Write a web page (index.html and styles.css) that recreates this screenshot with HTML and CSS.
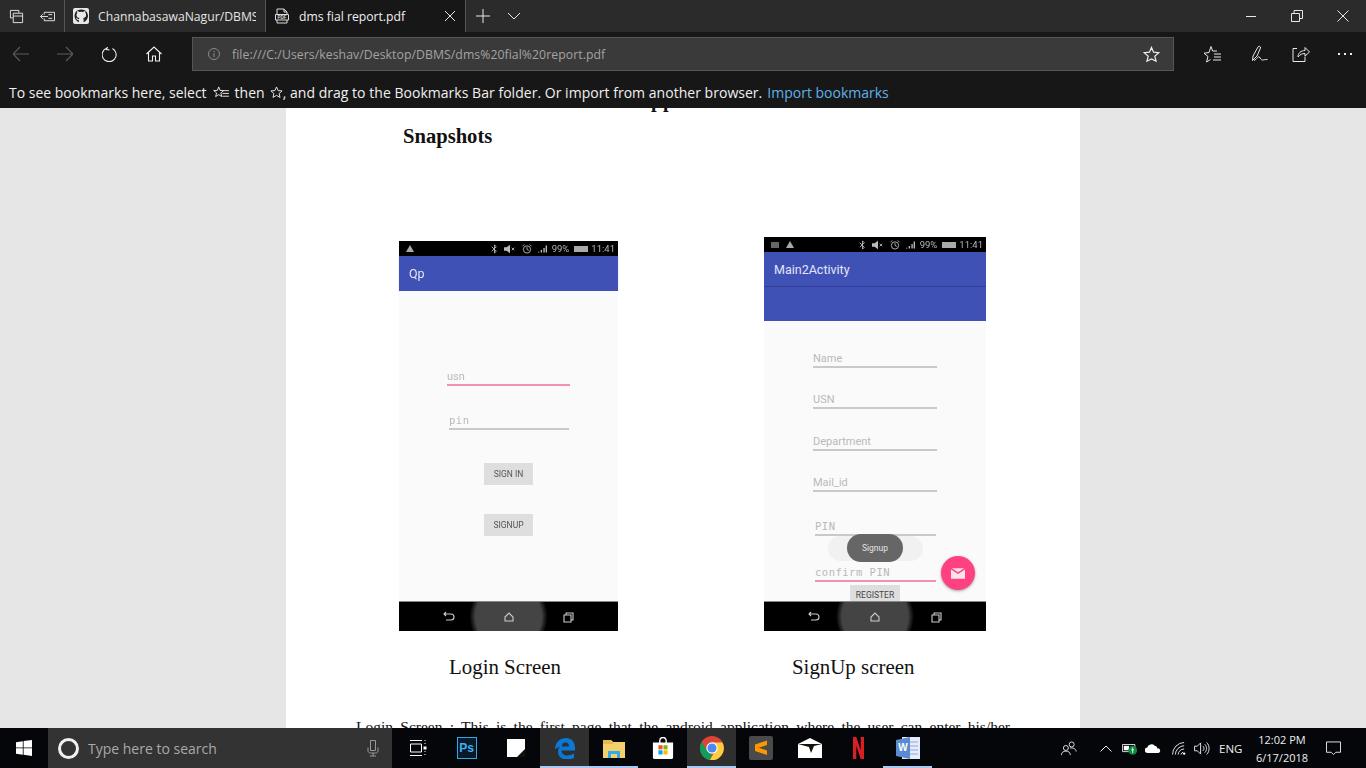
FILE: index.html
```html
<!DOCTYPE html>
<html lang="en">
<head>
    <meta charset="UTF-8">
    <meta name="viewport" content="width=device-width, initial-scale=1.0">
    <title>dms fial report.pdf</title>
    <link rel="stylesheet" href="styles.css">
</head>
<body>
<div class="window">
    <!-- tabs -->
    <div class="titlebar">
        <div class="tab-tools">
            <svg class="ic" viewBox="0 0 16 16"><path d="M1.5 1.5h9v2.5M1.5 1.5v8h2.5M4.5 4.5h10v10h-10zM4.5 7.5h10"/></svg>
            <svg class="ic" viewBox="0 0 16 16"><path d="M4.5 3.5h11v9h-11v-2.500M4.500 3.500v2.500M.5 8h8M3 5.500L.5 8 3 10.500M9 6h4M9 10h4"/></svg>
        </div>
        <div class="tab">
            <svg class="tab-icon" viewBox="0 0 16 16"><rect width="16" height="16" rx="2" fill="#e8e8e8"/><path fill="#222" d="M8 1.500C4.300 1.500 1.500 4.300 1.500 8c0 2.900 1.900 5.300 4.400 6.200v-2.100c-1.600.3-2-.7-2.200-1.200-.2-.4-.5-.8-.8-1 .4-.3 1.100.1 1.500.7.500.7 1.200.6 1.600.4 0-.4.200-.8.500-1-1.700-.3-3-1-3-3.100 0-.7.300-1.300.7-1.800-.1-.2-.3-1 .1-2 0 0 .7-.2 2.100.8a7 7 0 0 1 3.800 0c1.400-1 2.100-.8 2.100-.8.400 1 .2 1.800.1 2 .5.500.7 1.100.7 1.800 0 2.100-1.300 2.800-3 3.100.3.300.5.700.5 1.300v2.900c2.500-.9 4.400-3.300 4.400-6.200 0-3.700-2.800-6.500-6.500-6.500z"/></svg>
            <span class="tab-title">ChannabasawaNagur/DBMS</span>
        </div>
        <div class="tab tab-active">
            <svg class="tab-icon" viewBox="0 0 16 16"><path class="stroke" d="M3 6V1h7l3 3v2M3 12v3h10v-3M10 1v3h3M1.500 6.500h13v5.500h-13z"/><text x="8" y="11" class="pdf-mark">PDF</text></svg>
            <span class="tab-title">dms fial report.pdf</span>
            <svg class="ic tab-close" viewBox="0 0 12 12"><path d="M1 1l10 10M11 1L1 11"/></svg>
        </div>
        <svg class="ic tab-plus" viewBox="0 0 14 14"><path d="M7 0v14M0 7h14"/></svg>
        <svg class="ic tab-down" viewBox="0 0 14 8"><path d="M1 1l6 6 6-6"/></svg>
        <div class="win-controls">
            <svg class="ic" viewBox="0 0 12 12"><path d="M1 6.500h10"/></svg>
            <svg class="ic" viewBox="0 0 12 12"><path d="M.5 3.500h8v8h-8zM3 3.500V.5h8.500v8H8.500"/></svg>
            <svg class="ic" viewBox="0 0 12 12"><path d="M.5.5l11 11M11.500.5l-11 11"/></svg>
        </div>
    </div>

    <!-- address bar -->
    <div class="toolbar">
        <svg class="nav-btn dim" viewBox="0 0 16 16"><path d="M0 8h16M7 1L0 8l7 7"/></svg>
        <svg class="nav-btn dim" viewBox="0 0 16 16"><path d="M0 8h16M9 1l7 7-7 7"/></svg>
        <svg class="nav-btn" viewBox="0 0 16 16"><path d="M5.500 1.500A7 7 0 1 0 11 2M6 .5L5 3 8 3.500" transform="translate(-.5 .5)"/></svg>
        <svg class="nav-btn" viewBox="0 0 16 16"><path d="M.5 8L8 1l7.500 7M2.500 6.500v8.500h4v-5h3v5h4V6.500"/></svg>
        <div class="address">
            <svg class="info" viewBox="0 0 12 12"><circle cx="6" cy="6" r="5.500"/><path d="M6 5v4M6 3v1"/></svg>
            <span class="url">file:///C:/Users/keshav/Desktop/DBMS/dms%20fial%20report.pdf</span>
            <svg class="addr-star" viewBox="0 0 18 18"><path d="M9 1.500l2.200 5.100 5.500.5-4.200 3.600 1.300 5.400L9 13.700l-4.800 2.400 1.300-5.400L1.300 7.100l5.500-.5z"/></svg>
        </div>
        <div class="tools">
            <svg class="tool" viewBox="0 0 18 18"><path d="M7 1.500l1.600 4.500h4.400M6.500 14.500l-4 2.500 1.500-5.500L0 8.200 5 7.500 7 1.500M10 9h7M10 12h7M9 15h8"/></svg>
            <svg class="tool tool-pen" viewBox="0 0 18 18"><path d="M1.500 15.500L2 11l5-9c1-1.500 3-.5 2.500 1L6 11zM3 15.500c3-1 4-5 5.500-3.500 1 1.500 1.500 3 3 3 1 0 2-.5 5-.5"/></svg>
            <svg class="tool" viewBox="0 0 18 18"><path d="M5 3.500H1v13h12v-5M6 12c0-4 3-6.500 7-6.500V2.500l4.500 4.500L13 11V8.500c-3 0-5 1-7 3.500z"/></svg>
            <div class="more"><i></i><i></i><i></i></div>
        </div>
    </div>

    <div class="favbar">
        <span>To see bookmarks here, select</span>
        <svg class="fav-star" viewBox="0 0 18 14"><path d="M6 1l1.400 3.700 4 .2-3.100 2.600 1 3.900L6 9.300l-3.300 2.100 1-3.900L.6 4.900l4-.2zM11 5h6M10 8h7M10 11h7"/></svg>
        <span>then</span>
        <svg class="fav-star small" viewBox="0 0 14 14"><path d="M7 1l1.700 3.900 4.300.4-3.200 2.800 1 4.200L7 10.100l-3.800 2.200 1-4.200L1 5.300l4.300-.4z"/></svg><span class="tight">, and drag to the Bookmarks Bar folder. Or import from another browser.</span>
        <a class="fav-link">Import bookmarks</a>
    </div>

    <!-- pdf -->
    <div class="viewer">
        <div class="page">
            <div class="cut-line">pp</div>
            <h2 class="snap-title">Snapshots</h2>

            <div class="shots">
                <div class="phone phone-login">
                    <div class="status">
                        <span class="warn"></span>
                        <span class="status-right">
                            <svg viewBox="0 0 8 11"><path d="M1 3l5 5-2 2V1l2 2-5 5"/></svg>
                            <svg class="wide" viewBox="0 0 14 10"><path class="solid" d="M0 3h3l4-3v10L3 7H0z"/><path d="M9 3.500l3 3M12 3.500l-3 3"/></svg>
                            <svg class="wide" viewBox="0 0 11 11"><circle cx="5.500" cy="6" r="4"/><path d="M5.500 3.500V6l2 1M.5 2.500l2-2M10.500 2.500l-2-2"/></svg>
                            <svg viewBox="0 0 10 8"><path class="solid" d="M0 7h1.500v1H0zM3 5h1.500v3H3zM6 3h1.500v5H6zM8.500 0H10v8H8.500z"/></svg>
                            <span class="pct">99%</span><b class="batt"></b><span>11:41</span>
                        </span>
                    </div>
                    <div class="appbar">Qp</div>
                    <div class="screen">
                        <div class="field f-usn"><span>usn</span></div>
                        <div class="field f-pin mono"><span>pin</span></div>
                        <div class="a-btn b-signin">SIGN IN</div>
                        <div class="a-btn b-signup">SIGNUP</div>
                    </div>
                    <div class="navbar">
                        <svg viewBox="0 0 12 12"><path d="M1 3h7a3 3 0 0 1 0 6H3M3 1L1 3l2 2"/></svg>
                        <svg viewBox="0 0 12 12"><path d="M2 6l4-4 4 4v4H2z"/></svg>
                        <svg viewBox="0 0 12 12"><path d="M2 4h7v7H2zM4 4V2h7v7H9"/></svg>
                    </div>
                </div>

                <div class="phone phone-signup">
                    <div class="status">
                        <span class="mini-sq"></span><span class="warn"></span>
                        <span class="status-right">
                            <svg viewBox="0 0 8 11"><path d="M1 3l5 5-2 2V1l2 2-5 5"/></svg>
                            <svg class="wide" viewBox="0 0 14 10"><path class="solid" d="M0 3h3l4-3v10L3 7H0z"/><path d="M9 3.500l3 3M12 3.500l-3 3"/></svg>
                            <svg class="wide" viewBox="0 0 11 11"><circle cx="5.500" cy="6" r="4"/><path d="M5.500 3.500V6l2 1M.5 2.500l2-2M10.500 2.500l-2-2"/></svg>
                            <svg viewBox="0 0 10 8"><path class="solid" d="M0 7h1.500v1H0zM3 5h1.500v3H3zM6 3h1.500v5H6zM8.500 0H10v8H8.500z"/></svg>
                            <span class="pct">99%</span><b class="batt"></b><span>11:41</span>
                        </span>
                    </div>
                    <div class="appbar tall"><span class="appbar-name">Main2Activity</span></div>
                    <div class="screen">
                        <div class="field r1"><span>Name</span></div>
                        <div class="field r2"><span>USN</span></div>
                        <div class="field r3"><span>Department</span></div>
                        <div class="field r2"><span>Mail_id</span></div>
                        <div class="field r5 mono"><span>PIN</span></div>
                        <div class="field r6 mono focus"><span>confirm PIN</span></div>
                        <div class="a-btn b-register">REGISTER</div>
                        <div class="toast-ghost"></div>
                        <div class="toast">Signup</div>
                        <div class="fab">
                            <svg viewBox="0 0 16 12"><path d="M0 1.500l8 5 8-5V12H0zM1 0h14L8 4.500z"/></svg>
                        </div>
                    </div>
                    <div class="navbar">
                        <svg viewBox="0 0 12 12"><path d="M1 3h7a3 3 0 0 1 0 6H3M3 1L1 3l2 2"/></svg>
                        <svg viewBox="0 0 12 12"><path d="M2 6l4-4 4 4v4H2z"/></svg>
                        <svg viewBox="0 0 12 12"><path d="M2 4h7v7H2zM4 4V2h7v7H9"/></svg>
                    </div>
                </div>
            </div>

            <div class="captions">
                <span class="cap-login">Login Screen</span>
                <span class="cap-signup">SignUp screen</span>
            </div>
            <p class="para">Login Screen : This is the first page that the android application where the user can enter his/her</p>
        </div>
    </div>

    <!-- taskbar -->
    <div class="taskbar">
        <div class="start">
            <svg viewBox="0 0 16 16"><path fill="#fff" d="M0 2.200L6.800 1.200V7.500H0zM7.600 1.100L16 0v7.500H7.600zM0 8.300h6.800v6.500L0 13.800zM7.600 8.300H16V16l-8.400-1.200z"/></svg>
        </div>
        <div class="search">
            <span class="cortana"></span>
            <span class="search-text">Type here to search</span>
            <svg class="mic" viewBox="0 0 12 18"><path d="M3.500 1.500h5v10h-5zM1 8.500v3.500c0 1 1 2 2.500 2h5c1.500 0 2.500-1 2.500-2V8.500M6 14v3M3 17h6"/></svg>
        </div>
        <div class="apps">
            <div class="app"><svg class="line-ic small-ic" viewBox="0 0 18 18"><path d="M1 1.500h12M1 16.500h12M1.500 5h11v8h-11zM16 1v1M16 4v1M16 12v1M16 15v1"/><rect x="14.500" y="7.500" width="3" height="3" fill="#fff" stroke="none"/></svg></div>
            <div class="app"><span class="ps">Ps</span></div>
            <div class="app"><svg class="small-ic" viewBox="0 0 18 18"><path fill="#fff" d="M0 0h18v18H0z"/><path fill="#111" d="M18 10v8h-8z"/></svg></div>
            <div class="app active"><svg viewBox="0 0 22 22"><path fill="#0a78d7" d="M1 11.500C1.500 5 6.500 1 12 1c5.500 0 9 4 9 10v2.500H7.500c.2 3.500 2.700 5 5.500 5 2.500 0 4.700-.7 7-2v4.500c-2 1-4.500 1.500-7.500 1.500-5.500 0-8.500-3.500-8.500-7.500 0-2 .5-4 2-5.500-2 .8-3.500 1.700-4.500 2.500zM7.800 9.500h7.200C15 7 13.500 5.500 11.500 5.500 9.500 5.500 8 7 7.800 9.500z"/></svg></div>
            <div class="app open"><svg viewBox="0 0 22 20"><path fill="#f3cf6e" d="M0 2h8l2 2h12v16H0z"/><path fill="#e6b84e" d="M0 2h8l2 2v2H0z"/><path fill="#37a9e6" d="M5 13h12v7h-3v-4H8v4H5z"/></svg></div>
            <div class="app"><svg viewBox="0 0 22 24"><path fill="none" stroke="#fff" stroke-width="1.500" d="M7.500 7V4a3.500 3.500 0 0 1 7 0v3"/><path fill="#fff" d="M0 6h22v16a2 2 0 0 1-2 2H2a2 2 0 0 1-2-2z"/><path fill="#f25022" d="M6 9h4.500v4.500H6z"/><path fill="#7fba00" d="M11.500 9H16v4.500h-4.500z"/><path fill="#00a4ef" d="M6 14.500h4.500V19H6z"/><path fill="#ffb900" d="M11.500 14.500H16V19h-4.500z"/></svg></div>
            <div class="app active"><svg class="big-ic" viewBox="0 0 22 22"><circle cx="11" cy="11" r="11" fill="#db4437"/><path fill="#ffcd40" d="M11 6h9.500A11 11 0 0 1 9 22l5-8.500z"/><path fill="#0f9d58" d="M1.500 5.500L7 14.500 11 16 9 22A11 11 0 0 1 1.500 5.500z"/><circle cx="11" cy="11" r="5.200" fill="#fff"/><circle cx="11" cy="11" r="4.200" fill="#4a89f3"/></svg></div>
            <div class="app"><svg class="big-ic" viewBox="0 0 24 24"><rect width="24" height="24" rx="2" fill="#4a4a4a"/><path fill="#ff9800" d="M18 4.500v4.500L6 13V8.500zM6 10.500l12 4v4.500L6 15z"/></svg></div>
            <div class="app"><svg class="big-ic" viewBox="0 0 24 20"><path fill="#fff" d="M0 6L12 0l12 6v14H0z"/><path fill="#111" d="M0 6h24l-8 2-3 7-2-6z"/></svg></div>
            <div class="app"><svg class="narrow" viewBox="0 0 10 20"><path fill="#d81f26" d="M0 0h3l4 12V0h3v20H7L3 8v12H0z"/></svg></div>
            <div class="app open-wide"><svg class="big-ic" viewBox="0 0 24 22"><path fill="#e3ecf8" d="M6 0h18v22H6z"/><path stroke="#8da9d8" d="M14 5h8M14 9h8M14 13h8M14 17h8"/><path fill="#5b8ad0" d="M0 3l14-3v22L0 19z"/><text x="7" y="14" class="word-mark">W</text></svg></div>
        </div>
        <div class="tray">
            <svg class="t-people" viewBox="0 0 18 16"><circle cx="5.500" cy="8" r="2.800"/><path d="M.5 16c0-3 2-4.500 5-4.500s5 1.500 5 4.500"/><circle cx="12" cy="4" r="2.800"/><path d="M10 8c3-.5 7 .5 7 4"/></svg>
            <svg class="t-chev" viewBox="0 0 12 7"><path d="M.5 6.500L6 1l5.500 5.500"/></svg>
            <svg class="t-batt" viewBox="0 0 18 16"><path d="M.5 3.500h14v8H.5z"/><rect x="2" y="5" width="6" height="5" fill="#fff" stroke="none"/><circle cx="12" cy="10" r="5" fill="#0d8a3a" stroke="none"/><path d="M12 7v6M10.500 9.500h3" stroke="#fff"/></svg>
            <svg class="t-cloud" viewBox="0 0 18 11"><path fill="#fff" stroke="none" d="M3 11a3 3 0 0 1-.5-6A5 5 0 0 1 11 3a3.500 3.500 0 0 1 3 3 2.500 2.500 0 0 1 1 5z"/></svg>
            <svg class="t-wifi" viewBox="0 0 16 14"><path d="M.5 13.500A13 13 0 0 1 13 .5M3.500 13.500a10 10 0 0 1 9.500-9.500M6.500 13.500A7 7 0 0 1 13 7.500M9.500 13.500A3.500 3.500 0 0 1 12 11"/><circle cx="13" cy="12.500" r="1.300" fill="#fff" stroke="none"/></svg>
            <svg class="t-vol" viewBox="0 0 17 14"><path d="M.5 4.500h3L7 1v12L3.500 9.500h-3zM9.500 4.500c1.500 1.500 1.500 3.500 0 5M11.500 2.500c2.500 2.500 2.500 6.500 0 9M13.500.5c3.500 3.500 3.500 9.500 0 13"/></svg>
            <span class="lang">ENG</span>
            <div class="clock"><span>12:02 PM</span><span>6/17/2018</span></div>
            <svg class="t-note" viewBox="0 0 16 15"><path d="M.5.500h15v11h-5L8 14l-2.500-2.500h-5z"/></svg>
        </div>
    </div>
</div>
</body>
</html>
```

FILE: styles.css
```css
* {
    box-sizing: border-box;
}
html, body {
    margin: 0;
    padding: 0;
    height: 100%;
    overflow: hidden;
}
body {
    font-family: "Open Sans", "Noto Sans", sans-serif;
    background-color: #e6e6e6;
}
svg {
    display: block;
    flex: none;
}
.window {
    display: flex;
    flex-direction: column;
    width: 1366px;
    height: 768px;
    overflow: hidden;
}

/* title bar */
.titlebar {
    display: flex;
    align-items: center;
    height: 32px;
    flex: none;
    background-color: #2b2b2b;
    color: #e4e4e4;
    font-size: 13px;
}
.ic {
    width: 15px;
    height: 15px;
    fill: none;
    stroke: #e8e8e8;
    stroke-width: 1;
}
.tab-tools {
    display: flex;
    align-items: center;
    gap: 16px;
    width: 65px;
    height: 32px;
    padding-left: 9px;
    border-right: 1px solid #555;
}
.tab {
    display: flex;
    align-items: center;
    width: 201px;
    height: 32px;
    padding: 0 9px 0 8px;
    border-right: 1px solid #555;
}
.tab-active {
    width: 200px;
    padding: 0 0 0 8px;
    background-color: #171717;
    color: #f0f0f0;
}
.tab-icon {
    width: 16px;
    height: 16px;
    margin-right: 9px;
}
.stroke {
    fill: none;
    stroke: #ddd;
    stroke-width: 1;
}
.pdf-mark {
    font-size: 4.500px;
    font-weight: 700;
    fill: #ddd;
    text-anchor: middle;
    font-family: "Liberation Sans", sans-serif;
}
.tab-title {
    flex: 1;
    overflow: hidden;
    white-space: nowrap;
    font-size: 12.200px;
}
.tab-close {
    width: 12px;
    height: 12px;
    margin-right: 9px;
}
.tab-plus {
    width: 14px;
    height: 14px;
    margin-left: 10px;
}
.tab-down {
    width: 14px;
    height: 8px;
    margin-left: 17px;
}
.win-controls {
    display: flex;
    align-items: center;
    gap: 34px;
    margin-left: auto;
    padding-right: 17px;
}
.win-controls .ic {
    width: 12px;
    height: 12px;
}

/* toolbar */
.toolbar {
    display: flex;
    align-items: center;
    height: 43px;
    flex: none;
    padding-top: 1px;
    padding-left: 13px;
    background-color: #171717;
}
.nav-btn {
    width: 16px;
    height: 16px;
    margin-right: 28.400px;
    fill: none;
    stroke: #f0f0f0;
    stroke-width: 1.100;
}
.nav-btn.dim {
    stroke: #5c5c5c;
}
.address {
    display: flex;
    align-items: center;
    width: 982px;
    height: 34px;
    margin-left: 1.400px;
    padding: 0 13px 0 15px;
    background-color: #3a3a3a;
    border: 1px solid #565656;
}
.info {
    width: 12px;
    height: 12px;
    margin-right: 12px;
    fill: none;
    stroke: #8a8a8a;
}
.url {
    flex: 1;
    color: #a3a3a3;
    font-size: 12.250px;
    letter-spacing: .06px;
    white-space: nowrap;
}
.addr-star {
    width: 17px;
    height: 17px;
    fill: none;
    stroke: #eee;
    stroke-width: 1.300;
}
.tools {
    display: flex;
    align-items: center;
    gap: 26px;
    margin-left: 30px;
}
.tool {
    width: 18px;
    height: 18px;
    fill: none;
    stroke: #e8e8e8;
    stroke-width: 1;
}
.tool-pen {
    margin: 0 -3px 0 3px;
}
.more {
    display: flex;
    gap: 4px;
    margin-left: 2px;
}
.more i {
    width: 2px;
    height: 2px;
    background-color: #eee;
}

/* bookmarks hint */
.favbar {
    display: flex;
    align-items: center;
    height: 33px;
    flex: none;
    padding-left: 9px;
    padding-top: 2px;
    gap: 5px;
    background-color: #171717;
    color: #f0f0f0;
    font-size: 14px;
    white-space: nowrap;
}
.fav-star {
    width: 17px;
    height: 13px;
    margin: 0 0 0 1px;
    fill: none;
    stroke: #eee;
    stroke-width: 1;
}
.fav-star.small {
    width: 13px;
    margin: 0 -5px 0 0;
}
.tight {
    letter-spacing: .03px;
}
.fav-link {
    color: #5fb2ea;
}

/* pdf area */
.viewer {
    flex: 1;
    min-height: 0;
    overflow: hidden;
    background-color: #e6e6e6;
}
.page {
    width: 794px;
    height: 620px;
    margin-left: 286px;
    overflow: hidden;
    background-color: #fff;
    color: #111;
    font-family: "Liberation Serif", "Times New Roman", serif;
}
.cut-line {
    height: 3px;
    margin-top: -9px;
    padding-left: 365px;
    font-size: 20px;
    font-weight: 700;
    line-height: 3px;
    letter-spacing: 1px;
}
.snap-title {
    margin: 22px 0 0 117px;
    font-size: 20.600px;
    line-height: 24px;
    font-weight: 700;
}
.shots {
    display: flex;
    align-items: flex-end;
    gap: 146px;
    height: 394px;
    margin-top: 89px;
    padding-left: 113px;
}
.captions {
    display: flex;
    margin-top: 24px;
    font-size: 20.900px;
    line-height: 24px;
}
.cap-login {
    margin-left: 163px;
}
.cap-signup {
    margin-left: 231px;
}
.para {
    width: 654px;
    margin: 39px 0 0 70px;
    font-size: 15.500px;
    line-height: 18px;
    text-align: justify;
    text-align-last: justify;
    white-space: nowrap;
}

/* phone shots */
.phone {
    display: flex;
    flex-direction: column;
    font-family: Roboto, sans-serif;
    filter: blur(.6px);
}
.phone-login {
    width: 219px;
    height: 390px;
}
.phone-signup {
    width: 222px;
    height: 394px;
}
.status {
    display: flex;
    align-items: center;
    gap: 7px;
    height: 15px;
    flex: none;
    padding: 0 3px 0 7px;
    background-color: #000;
    color: #b5b5b5;
    font-size: 9.500px;
}
.status-right {
    display: flex;
    align-items: center;
    gap: 3px;
    margin-left: auto;
    white-space: nowrap;
}
.status-right svg {
    width: 9px;
    height: 10px;
    margin-right: 2px;
    fill: none;
    stroke: #bbb;
    stroke-width: 1;
}
.status-right svg.wide {
    width: 12px;
}
.status-right .solid {
    fill: #bbb;
    stroke: none;
}
.pct {
    margin-right: 2px;
}
.warn {
    width: 0;
    height: 0;
    border-left: 4px solid transparent;
    border-right: 4px solid transparent;
    border-bottom: 7px solid #aaa;
}
.mini-sq {
    width: 8px;
    height: 6px;
    background-color: #666;
}
.batt {
    display: inline-block;
    width: 14px;
    height: 6px;
    background-color: #aaa;
}
.appbar {
    position: relative;
    display: flex;
    align-items: center;
    height: 35px;
    flex: none;
    padding-left: 10px;
    background-color: #3f51b5;
    color: #e4e6f5;
    font-size: 12.500px;
    box-shadow: 0 1px 1px #bbb;
}
.appbar.tall {
    display: block;
    height: 69px;
    padding: 0;
    box-shadow: none;
}
.appbar-name {
    display: flex;
    align-items: center;
    height: 35px;
    padding-left: 10px;
    border-bottom: 1px solid #303f95;
}
.screen {
    position: relative;
    flex: 1;
    min-height: 0;
    overflow: hidden;
    background-color: #fafafa;
}
.field {
    color: #b9b9b9;
    font-size: 11px;
    line-height: 13px;
    border-bottom: 2px solid #c9c9c9;
    padding-bottom: 1px;
}
.mono {
    font-family: "DejaVu Sans Mono", monospace;
    font-size: 10.500px;
    letter-spacing: .5px;
}
.f-usn {
    width: 123px;
    margin: 79px 0 0 48px;
    border-bottom-color: #f48fb1;
}
.f-pin {
    width: 120px;
    margin: 28px 0 0 50px;
}
.a-btn {
    display: flex;
    align-items: center;
    justify-content: center;
    background-color: #dedede;
    color: #555;
    font-size: 8.500px;
}
.b-signin {
    width: 49px;
    height: 22px;
    margin: 33px 0 0 85px;
}
.b-signup {
    width: 49px;
    height: 22px;
    margin: 29px 0 0 85px;
}
.r1 {
    width: 124px;
    margin: 31px 0 0 49px;
}
.r2 {
    width: 124px;
    margin: 25px 0 0 49px;
}
.r3 {
    width: 124px;
    margin: 26px 0 0 49px;
}
.r5 {
    width: 121px;
    margin: 28px 0 0 51px;
}
.r6 {
    width: 121px;
    margin: 30px 0 0 51px;
    border-bottom-color: #f48fb1;
}
.b-register {
    width: 50px;
    height: 24px;
    margin: 3px 0 0 86px;
    padding-bottom: 4px;
    color: #444;
}
.toast-ghost {
    position: absolute;
    left: 64px;
    top: 215px;
    width: 95px;
    height: 25px;
    border-radius: 13px;
    background-color: #f1f1f1;
}
.toast {
    position: absolute;
    left: 83px;
    top: 213px;
    width: 56px;
    height: 28px;
    border-radius: 14px;
    background-color: #666;
    color: #e2e2e2;
    font-size: 8.500px;
    line-height: 28px;
    text-align: center;
}
.fab {
    position: absolute;
    left: 177px;
    top: 235px;
    display: flex;
    align-items: center;
    justify-content: center;
    width: 34px;
    height: 34px;
    border-radius: 50%;
    background-color: #ff4081;
    box-shadow: 0 1px 3px rgba(0, 0, 0, .35);
}
.fab svg {
    width: 14px;
    height: 11px;
    fill: #fbe3ec;
}
.navbar {
    display: flex;
    align-items: center;
    justify-content: space-between;
    height: 30px;
    flex: none;
    padding: 0 44px;
    border-top: 1px solid #888;
    background: radial-gradient(circle at 50% 50%, #444 0, #444 33px, #000 39px);
}
.navbar svg {
    width: 12px;
    height: 12px;
    fill: none;
    stroke: #ccc;
    stroke-width: 1.100;
}

/* taskbar */
.taskbar {
    display: flex;
    align-items: center;
    height: 40px;
    flex: none;
    background-color: #05060a;
    color: #eee;
}
.start {
    display: flex;
    align-items: center;
    width: 48px;
    padding-left: 16px;
}
.start svg {
    width: 16px;
    height: 16px;
}
.search {
    display: flex;
    align-items: center;
    width: 344px;
    height: 40px;
    padding: 0 13px 0 10px;
    background-color: #333;
}
.cortana {
    width: 21px;
    height: 21px;
    border: 3px solid #f0f0f0;
    border-radius: 50%;
    margin-right: 9px;
}
.search-text {
    flex: 1;
    color: #a9a9a9;
    font-size: 14px;
}
.mic {
    width: 12px;
    height: 18px;
    fill: none;
    stroke: #999;
}
.apps {
    display: flex;
    margin-left: 1px;
}
.app {
    display: flex;
    align-items: center;
    justify-content: center;
    width: 49px;
    height: 40px;
}
.app svg {
    width: 22px;
    height: 22px;
}
.app svg.small-ic {
    width: 18px;
    height: 18px;
}
.app svg.big-ic {
    width: 24px;
    height: 24px;
}
.app svg.narrow {
    width: 11px;
}
.app.active,
.app.open,
.app.open-wide {
    border-bottom: 2px solid #a9c8f2;
    padding-top: 2px;
}
.app.active {
    background-color: #2f2f2f;
}
.line-ic {
    fill: none;
    stroke: #fff;
}
.ps {
    display: block;
    width: 20px;
    height: 22px;
    border: 1px solid #2fa8e8;
    background-color: #0b1a2a;
    color: #3db2ee;
    font-family: "Liberation Sans", sans-serif;
    font-size: 12px;
    font-weight: 700;
    line-height: 20px;
    text-align: center;
}
.word-mark {
    fill: #fff;
    font-family: "Liberation Sans", sans-serif;
    font-size: 10px;
    font-weight: 700;
    text-anchor: middle;
}
.tray {
    display: flex;
    align-items: center;
    margin-left: auto;
    height: 40px;
    fill: none;
    stroke: #eee;
}
.t-people {
    width: 16px;
    height: 16px;
    margin-right: 23px;
}
.t-chev {
    width: 12px;
    height: 7px;
    margin-right: 10px;
}
.t-batt {
    width: 16px;
    height: 15px;
    margin-right: 7px;
}
.t-cloud {
    width: 16px;
    height: 10px;
    margin-right: 11px;
}
.t-wifi {
    width: 15px;
    height: 13px;
    margin-right: 7px;
}
.t-vol {
    width: 16px;
    height: 13px;
    margin-right: 9px;
}
.lang {
    width: 24px;
    margin-right: 14px;
    font-size: 11.500px;
    color: #eee;
    white-space: nowrap;
}
.clock {
    display: flex;
    flex-direction: column;
    align-items: center;
    gap: 3px;
    width: 50px;
    margin-right: 19px;
    font-size: 11px;
    line-height: 15px;
    color: #eee;
    white-space: nowrap;
}
.t-note {
    width: 15px;
    height: 15px;
    margin-right: 25px;
}
```
